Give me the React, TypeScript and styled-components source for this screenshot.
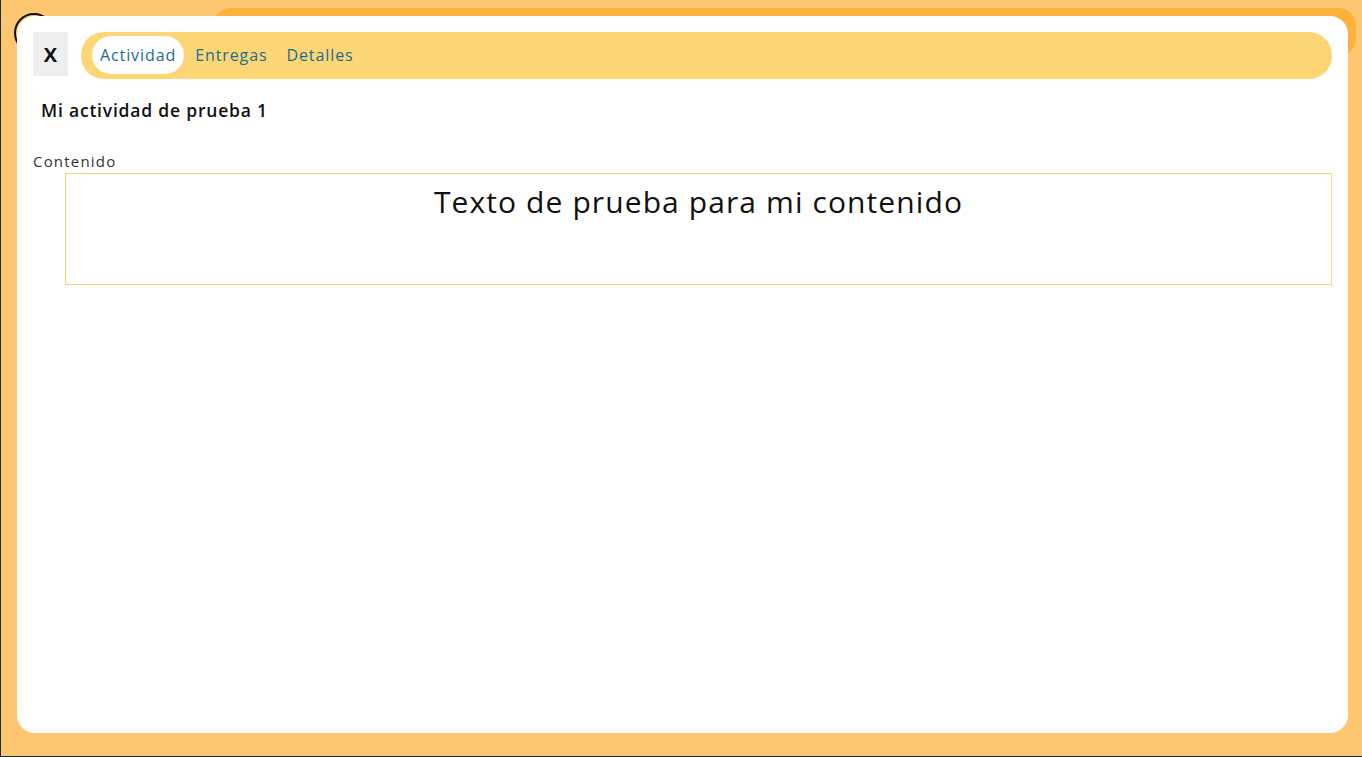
import React, { useState } from "react";
import styled, { createGlobalStyle } from "styled-components";

const GlobalStyle = createGlobalStyle`
  html, body {
    margin: 0;
    padding: 0;
    background: #1d2b2c;
    font-family: "Open Sans", "Noto Sans", sans-serif;
  }
  * {
    box-sizing: border-box;
  }
`;

const TABS = ["Actividad", "Entregas", "Detalles"];

export default function App() {
  const [tab, setTab] = useState("Actividad");

  return (
    <>
      <GlobalStyle />
      <UIPage>
        <UIOverlay>
          <UIBehindAvatar />
          <UIBehindBar />
          <UIModal>
            <UIHead>
              <UICloseButton>X</UICloseButton>
              <UITabs>
                {TABS.map((name) => (
                  <UITab key={name} $active={name === tab} onClick={() => setTab(name)}>
                    {name}
                  </UITab>
                ))}
              </UITabs>
            </UIHead>

            <UITitle>Mi actividad de prueba 1</UITitle>

            <UIFieldLabel>Contenido</UIFieldLabel>
            <UIContentBox>
              <UIContentText>Texto de prueba para mi contenido</UIContentText>
            </UIContentBox>
          </UIModal>
        </UIOverlay>
      </UIPage>
    </>
  );
}

const UIPage = styled.div`
  width: 1362px;
  height: 757px;
  padding: 0 0 1px 1px;
  display: flex;
`;

const UIOverlay = styled.div`
  position: relative;
  flex: 1;
  background: #fdc771;
  padding: 16px 14px 23px 16px;
  display: flex;
  overflow: hidden;
`;

// page elements left under the overlay
const UIBehindAvatar = styled.div`
  position: absolute;
  left: 13px;
  top: 13px;
  width: 40px;
  height: 40px;
  border-radius: 50%;
  border: 2px solid #111;
  background: #fdc771;
`;

const UIBehindBar = styled.div`
  position: absolute;
  left: 212px;
  top: 8px;
  right: 6px;
  height: 48px;
  border-radius: 18px;
  background: #fcb13b;
`;

const UIModal = styled.div`
  position: relative;
  flex: 1;
  background: #ffffff;
  border-radius: 18px;
  padding: 16px;
  display: flex;
  flex-direction: column;
`;

const UIHead = styled.div`
  display: flex;
  align-items: flex-start;
  gap: 13px;
`;

const UICloseButton = styled.button`
  width: 35px;
  height: 44px;
  border: none;
  background: #eeeeee;
  font-family: "Open Sans", sans-serif;
  font-size: 20px;
  font-weight: 700;
  color: #111;
  padding: 0;
  cursor: pointer;
`;

const UITabs = styled.div`
  flex: 1;
  height: 47px;
  background: #fcd674;
  border-radius: 23px;
  padding: 4px 11px 5px;
  display: flex;
  align-items: center;
  gap: 3px;
`;

const UITab = styled.div<{ $active?: boolean }>`
  height: 38px;
  padding: 0 8px;
  display: flex;
  align-items: center;
  border-radius: 19px;
  background: ${(p) => (p.$active ? "#ffffff" : "transparent")};
  color: #1c6c92;
  font-size: 16px;
  letter-spacing: 0.9px;
  cursor: pointer;
`;

const UITitle = styled.div`
  margin: 17px 0 0 8px;
  font-size: 17.5px;
  font-weight: 600;
  letter-spacing: 0.8px;
  color: #111;
  line-height: 28px;
`;

const UIFieldLabel = styled.div`
  margin-top: 27px;
  font-size: 15px;
  letter-spacing: 1.2px;
  color: #333;
  line-height: 20px;
`;

const UIContentBox = styled.div`
  margin: 2px 0 0 32px;
  height: 112px;
  border: 1px solid #fbd36b;
  padding-top: 7px;
`;

const UIContentText = styled.div`
  text-align: center;
  font-size: 30px;
  letter-spacing: 1.1px;
  line-height: 42px;
  color: #111;
`;
